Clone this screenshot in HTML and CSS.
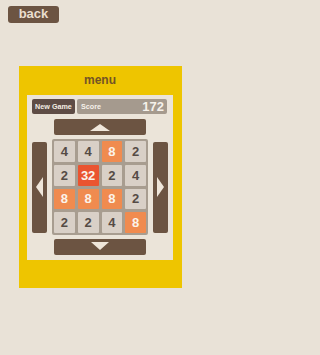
FILE: index.html
```html
<!DOCTYPE html>
<html>
<head>
<meta charset="utf-8">
<link rel="stylesheet" href="styles.css">
</head>
<body>
<div class="page">
  <div class="back">back</div>
  <div class="panel">
    <div class="title">menu</div>
    <div class="inner">
      <div class="topbar">
        <div class="newgame">New Game</div>
        <div class="score"><span class="score-label">Score</span><span class="score-val">172</span></div>
      </div>
      <div class="hbtn"><span class="tri up"></span></div>
      <div class="middle">
        <div class="vbtn"><span class="tri left"></span></div>
        <div class="grid">
          <div class="tile">4</div><div class="tile">4</div><div class="tile t8">8</div><div class="tile">2</div>
          <div class="tile">2</div><div class="tile t32">32</div><div class="tile">2</div><div class="tile">4</div>
          <div class="tile t8">8</div><div class="tile t8">8</div><div class="tile t8">8</div><div class="tile">2</div>
          <div class="tile">2</div><div class="tile">2</div><div class="tile">4</div><div class="tile t8">8</div>
        </div>
        <div class="vbtn"><span class="tri right"></span></div>
      </div>
      <div class="hbtn"><span class="tri down"></span></div>
    </div>
  </div>
</div>
</body>
</html>
```
FILE: styles.css
```css
html, body {
  margin: 0;
  padding: 0;
  background: #e9e2d7;
  font-family: "Liberation Sans", Arial, sans-serif;
}
.page {
  width: 200px;
  height: 355px;
  padding-top: 6px;
  box-sizing: border-box;
}
.back {
  margin-left: 8px;
  width: 51px;
  height: 17px;
  background: #6c5442;
  border-radius: 3px;
  color: #eadfcf;
  font-weight: bold;
  font-size: 13px;
  line-height: 16px;
  text-align: center;
}
.panel {
  margin-top: 43px;
  margin-left: 19px;
  width: 163px;
  height: 222px;
  background: #eec500;
  box-sizing: border-box;
  padding: 0 9px 0 8px;
  display: flex;
  flex-direction: column;
}
.title {
  height: 29px;
  line-height: 29px;
  text-align: center;
  color: #735426;
  font-weight: bold;
  font-size: 12px;
}
.inner {
  background: #ebe4d9;
  height: 165px;
  box-sizing: border-box;
  padding: 4px 0 0 0;
  display: flex;
  flex-direction: column;
  align-items: center;
}
.topbar {
  display: flex;
  gap: 2px;
  width: 135px;
  margin-left: -1px;
  height: 15px;
}
.newgame {
  width: 43px;
  background: #5e4c45;
  border-radius: 2px;
  color: #f3ece4;
  font-weight: bold;
  font-size: 7.2px;
  line-height: 15px;
  text-align: center;
  white-space: nowrap;
}
.score {
  flex: 1;
  background: #a59a8e;
  border-radius: 2px;
  display: flex;
  align-items: center;
  justify-content: space-between;
  padding: 0 3px 0 4px;
  color: #f6f1ea;
  font-weight: bold;
}
.score-label {
  font-size: 7.2px;
}
.score-val {
  font-size: 13px;
  line-height: 15px;
}
.hbtn {
  width: 92px;
  height: 16px;
  background: #6c5442;
  border-radius: 2px;
  display: flex;
  align-items: center;
  justify-content: center;
  margin-top: 5px;
}
.middle {
  display: flex;
  align-items: center;
  gap: 5px;
  margin-top: 4px;
}
.middle + .hbtn {
  margin-top: 4px;
}
.vbtn {
  width: 15px;
  height: 91px;
  background: #6c5442;
  border-radius: 2px;
  display: flex;
  align-items: center;
  justify-content: center;
}
.tri {
  width: 0;
  height: 0;
  display: block;
}
.tri.up {
  border-left: 10px solid transparent;
  border-right: 10px solid transparent;
  border-bottom: 7px solid #efe6da;
}
.tri.down {
  border-left: 9px solid transparent;
  border-right: 9px solid transparent;
  border-top: 8px solid #efe6da;
  margin-top: -2px;
}
.tri.left {
  border-top: 10px solid transparent;
  border-bottom: 10px solid transparent;
  border-right: 7px solid #efe6da;
}
.tri.right {
  border-top: 10px solid transparent;
  border-bottom: 10px solid transparent;
  border-left: 7px solid #efe6da;
}
.grid {
  width: 96px;
  height: 96px;
  box-sizing: border-box;
  background: #a89d90;
  border-radius: 2px;
  padding: 2px;
  display: grid;
  grid-template-columns: repeat(4, 1fr);
  grid-template-rows: repeat(4, 1fr);
  gap: 3px;
}
.tile {
  background: #d9d0c7;
  border-radius: 1px;
  color: #554b45;
  font-weight: bold;
  font-size: 13px;
  display: flex;
  align-items: center;
  justify-content: center;
}
.tile.t8 {
  background: #f08b4f;
  color: #fbf3ea;
}
.tile.t32 {
  background: #ea5430;
  color: #fbf3ea;
}
```
